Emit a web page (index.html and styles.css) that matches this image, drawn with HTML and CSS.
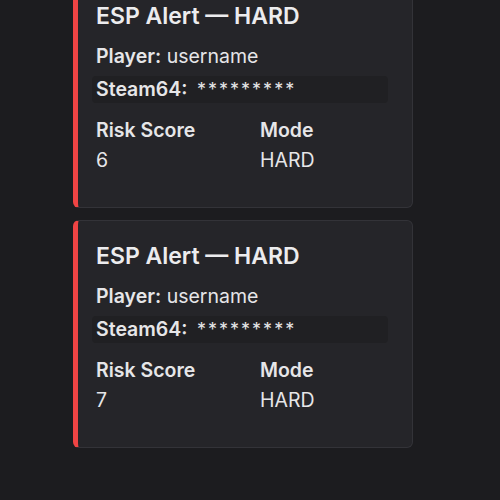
FILE: index.html
```html
<!DOCTYPE html>
<html>
<head>
<meta charset="utf-8">
<link rel="stylesheet" href="styles.css">
</head>
<body>
<main class="feed">
  <article class="alert">
    <h3 class="alert-title">ESP Alert — HARD</h3>
    <p class="line"><b>Player:</b> username</p>
    <p class="steam"><b>Steam64:</b> <span class="mask">*********</span></p>
    <div class="stats">
      <div><div class="stat-label">Risk Score</div><div class="stat-value">6</div></div>
      <div><div class="stat-label">Mode</div><div class="stat-value">HARD</div></div>
    </div>
  </article>
  <article class="alert">
    <h3 class="alert-title">ESP Alert — HARD</h3>
    <p class="line"><b>Player:</b> username</p>
    <p class="steam"><b>Steam64:</b> <span class="mask">*********</span></p>
    <div class="stats">
      <div><div class="stat-label">Risk Score</div><div class="stat-value">7</div></div>
      <div><div class="stat-label">Mode</div><div class="stat-value">HARD</div></div>
    </div>
  </article>
</main>
</body>
</html>
```
FILE: styles.css
```css
html, body {
  margin: 0;
  height: 100%;
  background: #1c1c1f;
  overflow: hidden;
}
body {
  font-family: "Inter", "Noto Sans", sans-serif;
  color: #e6e6e8;
}
.feed {
  display: flex;
  flex-direction: column;
  gap: 12px;
  width: 340px;
  margin: -20px 0 0 73px;
}
.alert {
  background: #252529;
  border: 1px solid #333338;
  border-left: 5px solid #ef4444;
  border-radius: 6px;
  padding: 20px 20px 34px 18px;
  height: 228px;
  box-sizing: border-box;
}
.alert-title {
  margin: 0;
  font-size: 23px;
  line-height: 30px;
  font-weight: 600;
  color: #ececee;
}
.line {
  margin: 12px 0 0;
  font-size: 19.5px;
  line-height: 26px;
  font-weight: 400;
}
.line b, .steam b { font-weight: 600; }
.steam {
  margin: 7px 4px 0 -4px;
  padding: 0 4px;
  font-size: 19.5px;
  line-height: 27px;
  background: #202023;
  border-radius: 4px;
}
.mask { margin-left: 4px; letter-spacing: 2px; font-size: 18px; }
.stats {
  display: grid;
  grid-template-columns: 164px 1fr;
  margin-top: 14px;
  font-size: 19.5px;
  line-height: 26px;
  font-weight: 400;
}
.stat-label { font-weight: 600; }
.stat-value { margin-top: 4px; }
```
